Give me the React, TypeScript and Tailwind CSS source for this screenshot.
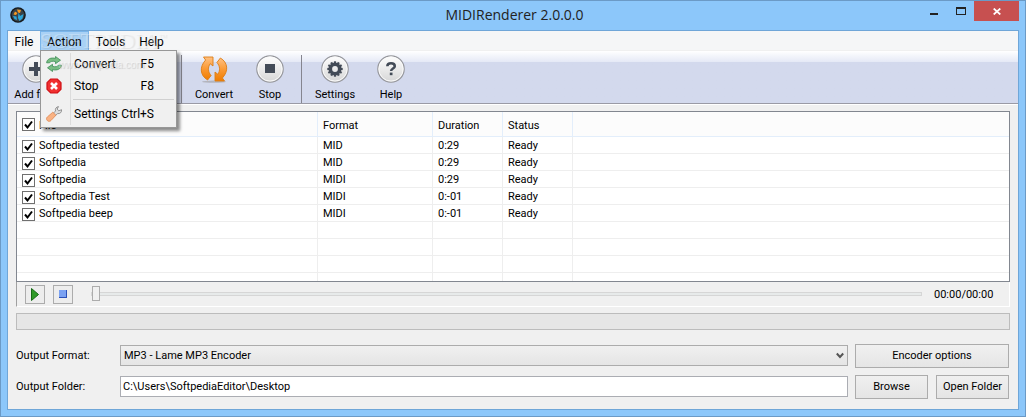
import { useState } from 'react';
import type { ReactNode } from 'react';

interface MidiFile {
  id: number;
  name: string;
  format: string;
  duration: string;
  status: string;
}

const FILES: MidiFile[] = [
  { id: 1, name: 'Softpedia tested', format: 'MID', duration: '0:29', status: 'Ready' },
  { id: 2, name: 'Softpedia', format: 'MID', duration: '0:29', status: 'Ready' },
  { id: 3, name: 'Softpedia', format: 'MIDI', duration: '0:29', status: 'Ready' },
  { id: 4, name: 'Softpedia Test', format: 'MIDI', duration: '0:-01', status: 'Ready' },
  { id: 5, name: 'Softpedia beep', format: 'MIDI', duration: '0:-01', status: 'Ready' },
];

const EMPTY_ROWS = [1, 2, 3, 4];

const BUTTON =
  'h-6 border border-[#acacac] bg-linear-to-b from-[#f0f0f0] to-[#e5e5e5] text-[11px] leading-4 text-black';

function AppIcon() {
  return (
    <svg viewBox="0 0 16 16" className="size-4" aria-hidden="true">
      <circle cx="8" cy="8" r="7.8" fill="#15191c" />
      <circle cx="8" cy="8" r="6.4" fill="#38434a" />
      <path d="M3.500 7.500 5 4.500 7.500 6 6 8z M7 2.500l4 .5-1 3-2-.5z" fill="#f59a23" />
      <path d="M8.500 5.500 10 9l3.500-2-1 4.500-3 2.500-1.500-3z M3 9l3.500.5.5 3.500-2.500-1z" fill="#2aa5d8" />
    </svg>
  );
}

function RoundIcon({ children }: { children: ReactNode }) {
  return (
    <svg viewBox="0 0 28 28" className="size-7" aria-hidden="true">
      <defs>
        <linearGradient id="disc" x1="0" y1="0" x2="0" y2="1">
          <stop offset="0" stopColor="#ffffff" />
          <stop offset="1" stopColor="#d6d6d6" />
        </linearGradient>
      </defs>
      <circle cx="14" cy="14" r="13.2" fill="url(#disc)" stroke="#96979c" strokeWidth="1.2" />
      <circle cx="14" cy="14" r="12.1" fill="none" stroke="#fafafa" strokeWidth="1" />
      {children}
    </svg>
  );
}

function PlusIcon() {
  return (
    <RoundIcon>
      <path d="M12 7h4v5h5v4h-5v5h-4v-5H7v-4h5z" fill="#434b57" />
    </RoundIcon>
  );
}

function SquareIcon() {
  return (
    <RoundIcon>
      <rect x="9" y="9" width="10" height="9" fill="#434b57" />
    </RoundIcon>
  );
}

function GearIcon() {
  const teeth = [0, 30, 60, 90, 120, 150];
  return (
    <RoundIcon>
      <circle cx="14" cy="14" r="4.700" fill="none" stroke="#434b57" strokeWidth="3.600" />
      {teeth.map((angle) => (
        <g key={angle} transform={`rotate(${angle} 14 14)`} fill="#434b57">
          <rect x="12.9" y="6.3" width="2.2" height="3" />
          <rect x="12.9" y="18.700" width="2.2" height="3" />
        </g>
      ))}
    </RoundIcon>
  );
}

function QuestionIcon() {
  return (
    <RoundIcon>
      <path
        d="M10.300 11.300C10.400 9 12 8.300 14 8.300s3.800.8 3.800 2.900c0 2.300-3.700 2.300-3.700 4.800"
        fill="none"
        stroke="#434b57"
        strokeWidth="2.500"
      />
      <rect x="12.800" y="17.600" width="2.700" height="2.600" fill="#434b57" />
    </RoundIcon>
  );
}

function ConvertIcon() {
  return (
    <svg viewBox="0 0 28 28" className="size-7" aria-hidden="true">
      <defs>
        <linearGradient id="arrows" x1="0" y1="0" x2="0" y2="1">
          <stop offset="0" stopColor="#ffc183" />
          <stop offset="0.5" stopColor="#fb9a35" />
          <stop offset="1" stopColor="#ee7c00" />
        </linearGradient>
      </defs>
      <ellipse cx="14" cy="26.700" rx="12" ry="1.100" fill="#b3b4bd" />
      <g fill="url(#arrows)" stroke="#dd7d14" strokeWidth="0.900" strokeLinejoin="round">
        <path d="M3.500 2h9.500v9l-2.800-2.300c-2.600 3.800-2.300 8.300.9 11.800L7.600 25C0 20.500-.8 12 5.600 5z" />
        <path d="M24.500 26H15v-9l2.800 2.300c2.600-3.800 2.300-8.300-.9-11.800L20.400 3c7.600 4.500 8.400 13 2 20z" />
      </g>
    </svg>
  );
}

function RefreshIcon() {
  return (
    <svg viewBox="0 0 16 16" className="size-4" aria-hidden="true">
      <g fill="#79bd83" stroke="#3c8d55" strokeWidth="0.800" strokeLinejoin="round">
        <path d="M.6 6.800C1 2.900 5 1.200 9.500 2.400V.5L14.500 4.200l-5 3.500V5.600C6.500 4.900 4.300 5.300 3.600 6.800z" />
        <path d="M15.400 9.200c-.4 3.900-4.400 5.600-8.900 4.400v1.900L1.500 11.800l5-3.500v2.100c3 .7 5.200.3 5.900-1.200z" />
      </g>
    </svg>
  );
}

function StopIcon() {
  return (
    <svg viewBox="0 0 16 16" className="size-4" aria-hidden="true">
      <path d="M4.700 1h6.600L15 4.700v6.600L11.300 15H4.700L1 11.300V4.700z" fill="#f03030" stroke="#d00f14" strokeWidth="1.200" />
      <path d="m5 5 6 6m0-6-6 6" stroke="#fff" strokeWidth="2.600" />
    </svg>
  );
}

function WrenchIcon() {
  return (
    <svg viewBox="0 0 16 16" className="size-4" aria-hidden="true">
      <path
        d="M7 7.500 9.500 5c-.6-2.200.7-4.200 3-4.400L11.200 3l1.500 1.800 2.900-1.100c.3 2.500-1.600 4.300-4 3.900L9 10z"
        fill="#dcdcdc"
        stroke="#808080"
        strokeWidth="0.800"
      />
      <path
        d="M6.800 6.200 9.900 9.200 5 14.500C2.600 17-1.100 13.400 1.300 11z"
        fill="#f9b283"
        stroke="#e0854f"
        strokeWidth="0.800"
      />
    </svg>
  );
}

function ToolButton({ label, icon, width }: { label: string; icon: ReactNode; width: string }) {
  return (
    <button type="button" className={`flex flex-col items-center whitespace-nowrap ${width}`}>
      {icon}
      <span className="mt-1 leading-4">{label}</span>
    </button>
  );
}

function Tick({ label, checked, onChange }: { label: string; checked: boolean; onChange: () => void }) {
  return (
    <span className="relative block size-[13px] shrink-0">
      <input
        type="checkbox"
        aria-label={label}
        checked={checked}
        onChange={onChange}
        className="block size-[13px] appearance-none border border-[#707070] bg-white"
      />
      {checked && (
        <svg viewBox="0 0 13 13" className="pointer-events-none absolute inset-0 size-[13px]" aria-hidden="true">
          <path d="m3 6.500 2.500 3L10 3.500" fill="none" stroke="#000" strokeWidth="2" />
        </svg>
      )}
    </span>
  );
}

function MenuItem({ label, shortcut, icon }: { label: string; shortcut: string; icon: ReactNode }) {
  return (
    <button type="button" role="menuitem" className="flex h-[22px] w-full items-center pl-[5px] text-left">
      {icon}
      <span className="ml-3 whitespace-nowrap">{label}</span>
      <span className="mr-[22px] flex-1 whitespace-nowrap text-right">{shortcut}</span>
    </button>
  );
}

function MenuBar() {
  return (
    <nav className="relative flex h-[19px] bg-[#f5f6f7] text-[12px] leading-4">
      <button type="button" className="w-8 pt-[2px]">File</button>
      <div className="relative">
        <button
          type="button"
          className="h-5 w-[49px] bg-[#a9d1f5] pt-px outline -outline-offset-1 outline-[#7ab5ea]"
        >
          Action
        </button>
        <div
          role="menu"
          className="absolute left-0 top-[19px] z-10 w-[137px] border border-[#979797] bg-[#f0f0f0] py-[2px] shadow-[3px_3px_3px_rgba(0,0,0,0.45)]"
        >
          <div className="pointer-events-none absolute inset-y-[2px] left-[29px] border-l border-[#dcdcdc]" />
          <MenuItem label="Convert" shortcut="F5" icon={<RefreshIcon />} />
          <MenuItem label="Stop" shortcut="F8" icon={<StopIcon />} />
          <div className="mb-[3px] ml-8 mr-[2px] mt-[2px] border-t border-[#d0d0d0]" />
          <MenuItem label="Settings" shortcut="Ctrl+S" icon={<WrenchIcon />} />
        </div>
      </div>
      <button type="button" className="w-[43px] pt-[2px]">Tools</button>
      <button type="button" className="w-[39px] pt-[2px]">Help</button>
      <div className="pointer-events-none absolute left-8 top-0 z-20 flex font-['Liberation_Serif',serif] text-[22px] leading-5 text-white/30 [text-shadow:1px_1px_1px_rgba(0,0,0,0.08)]">
        SOFTPEDIA<span className="text-[9px] leading-3">™</span>
      </div>
      <div className="pointer-events-none absolute left-[50px] top-7 z-20 font-['Liberation_Sans',sans-serif] text-[10px] leading-3 text-white/40 [text-shadow:1px_1px_1px_rgba(0,0,0,0.15)]">
        www.softpedia.com
      </div>
    </nav>
  );
}

export default function App() {
  const [selected, setSelected] = useState<number[]>(FILES.map((f) => f.id));
  const [folder, setFolder] = useState('C:\\Users\\SoftpediaEditor\\Desktop');
  const allSelected = selected.length === FILES.length;

  const toggle = (id: number) =>
    setSelected((prev) => (prev.includes(id) ? prev.filter((x) => x !== id) : [...prev, id]));

  return (
    <div className="border border-[#6b9ac6] bg-[#8cc7fa] px-[6px] pb-[6px] font-['Roboto',sans-serif] text-[11px] text-black">
      <header className="flex h-[29px] items-start">
        <div className="flex flex-1 pl-[3px] pt-[6px]">
          <AppIcon />
        </div>
        <h1 className="pt-1 font-['Open_Sans',sans-serif] text-[14px] leading-5 text-[#222]">MIDIRenderer 2.0.0.0</h1>
        <div className="flex flex-1 justify-end">
          <button type="button" aria-label="Minimize" className="flex h-5 w-[27px] items-center justify-center">
            <span className="mt-[6px] h-[2px] w-2 bg-[#222]" />
          </button>
          <button type="button" aria-label="Maximize" className="flex h-5 w-[27px] items-center justify-center">
            <span className="h-2 w-[10px] border border-t-2 border-[#222]" />
          </button>
          <button type="button" aria-label="Close" className="flex h-5 w-[45px] items-center justify-center bg-[#c75050]">
            <svg viewBox="0 0 8 7" className="h-[7px] w-2" aria-hidden="true">
              <path d="m.7.5 6.600 6m0-6-6.600 6" stroke="#fff" strokeWidth="1.700" />
            </svg>
          </button>
        </div>
      </header>

      <div className="border border-[#6fa6d8] bg-[#f0f0f0]">
        <MenuBar />
        <div className="mt-px flex h-[53px] items-start border-b border-[#9a9aa5] bg-linear-to-b from-white from-0% via-[#e5e9f6] via-[11px] to-[#d3d9ed] to-[11px] pt-1">
          <ToolButton label="Add files" icon={<PlusIcon />} width="w-[55px]" />
          <div className="ml-[118px] h-12 w-px bg-[#85858f]" />
          <ToolButton label="Convert" icon={<ConvertIcon />} width="ml-1 w-14" />
          <ToolButton label="Stop" icon={<SquareIcon />} width="w-14" />
          <div className="ml-[3px] h-12 w-px bg-[#85858f]" />
          <ToolButton label="Settings" icon={<GearIcon />} width="ml-[5px] w-14" />
          <ToolButton label="Help" icon={<QuestionIcon />} width="w-14" />
        </div>

        <main className="border-t border-white px-2 pb-[10px] pt-[6px]">
          <div className="border border-[#828790] bg-white">
            <table className="w-full table-fixed border-separate border-spacing-0 text-left leading-[14px]">
              <colgroup>
                <col className="w-[301px]" />
                <col className="w-[115px]" />
                <col className="w-[70px]" />
                <col className="w-[70px]" />
                <col />
              </colgroup>
              <thead>
                <tr className="h-[25px] bg-[#fcfcfc] *:border-b *:border-r *:border-[#e3eefb] *:p-0 *:pl-[5px] *:pt-[3px] *:font-normal">
                  <th className="pt-0!">
                    <div className="flex items-center gap-1">
                      <Tick
                        label="Select all"
                        checked={allSelected}
                        onChange={() => setSelected(allSelected ? [] : FILES.map((f) => f.id))}
                      />
                      <span className="pt-1">File</span>
                    </div>
                  </th>
                  <th>Format</th>
                  <th>Duration</th>
                  <th>Status</th>
                  <th className="border-r-0!" />
                </tr>
              </thead>
              <tbody>
                {FILES.map((file) => (
                  <tr
                    key={file.id}
                    className="h-[17px] *:border-b *:border-r *:border-[#eeeeee] *:p-0 *:pl-[5px] *:pt-[2px]"
                  >
                    <td>
                      <div className="flex items-center gap-1">
                        <Tick
                          label={file.name}
                          checked={selected.includes(file.id)}
                          onChange={() => toggle(file.id)}
                        />
                        {file.name}
                      </div>
                    </td>
                    <td>{file.format}</td>
                    <td>{file.duration}</td>
                    <td>{file.status}</td>
                    <td className="border-r-0!" />
                  </tr>
                ))}
                {EMPTY_ROWS.map((n) => (
                  <tr
                    key={n}
                    className={`*:border-r *:border-[#eeeeee] *:p-0 ${n < 4 ? 'h-[17px] *:border-b' : 'h-2'}`}
                  >
                    <td />
                    <td />
                    <td />
                    <td />
                    <td className="border-r-0!" />
                  </tr>
                ))}
              </tbody>
            </table>
          </div>

          <div className="flex h-[25px] items-center border-b border-l border-r border-white border-l-[#a0a0a0] pl-2">
            <button
              type="button"
              aria-label="Play"
              className="flex h-[19px] w-5 items-center justify-center border border-[#acacac] bg-[#ededed]"
            >
              <svg viewBox="0 0 8 13" className="h-[13px] w-2" aria-hidden="true">
                <path d="M.5.5v12l7-6z" fill="#2f9a28" stroke="#176b16" />
              </svg>
            </button>
            <button
              type="button"
              aria-label="Stop"
              className="ml-2 flex h-[19px] w-5 items-center justify-center border border-[#acacac] bg-[#ededed]"
            >
              <span className="size-2 border-b border-r border-[#2c51b8] bg-[#7ba2f2]" />
            </button>
            <input
              type="range"
              aria-label="Position"
              defaultValue={0}
              className="ml-[18px] h-4 min-w-0 flex-1 appearance-none bg-transparent [&::-webkit-slider-runnable-track]:h-1 [&::-webkit-slider-runnable-track]:border [&::-webkit-slider-runnable-track]:border-[#d6d6d6] [&::-webkit-slider-runnable-track]:bg-[#e7eaea] [&::-webkit-slider-thumb]:-mt-[7px] [&::-webkit-slider-thumb]:h-[15px] [&::-webkit-slider-thumb]:w-2 [&::-webkit-slider-thumb]:appearance-none [&::-webkit-slider-thumb]:border [&::-webkit-slider-thumb]:border-[#acacac] [&::-webkit-slider-thumb]:bg-[#f0f0f0]"
            />
            <span className="w-[87px] pl-3 pt-[2px]">00:00/00:00</span>
          </div>

          <div role="progressbar" aria-label="Conversion progress" className="mt-[6px] h-[17px] border border-[#bcbcbc] bg-[#e6e6e6]" />

          <div className="mt-[14px] flex items-start pr-px">
            <label htmlFor="format" className="w-[104px] pt-1 leading-4">Output Format:</label>
            <div className="relative mt-px h-[21px] min-w-0 flex-1">
              <select
                id="format"
                className="h-[21px] w-full appearance-none border border-[#acacac] bg-linear-to-b from-[#f0f0f0] to-[#e5e5e5] pl-[3px] pt-px leading-4"
              >
                <option>MP3 - Lame MP3 Encoder</option>
              </select>
              <svg viewBox="0 0 8 7" className="pointer-events-none absolute right-1 top-[7px] h-[7px] w-2" aria-hidden="true">
                <path d="m.8 1.500 3.200 3.500 3.200-3.500" fill="none" stroke="#555" strokeWidth="2" />
              </svg>
            </div>
            <button type="button" className={`ml-[7px] w-[154px] ${BUTTON}`}>Encoder options</button>
          </div>

          <div className="mt-[7px] flex items-start pr-px">
            <label htmlFor="folder" className="w-[104px] pt-1 leading-4">Output Folder:</label>
            <input
              id="folder"
              value={folder}
              onChange={(e) => setFolder(e.target.value)}
              className="mt-px h-[21px] min-w-0 flex-1 border border-[#abadb3] bg-white px-[2px] leading-4"
            />
            <button type="button" className={`ml-[7px] w-[73px] ${BUTTON}`}>Browse</button>
            <button type="button" className={`ml-2 w-[73px] ${BUTTON}`}>Open Folder</button>
          </div>
        </main>
      </div>
    </div>
  );
}
